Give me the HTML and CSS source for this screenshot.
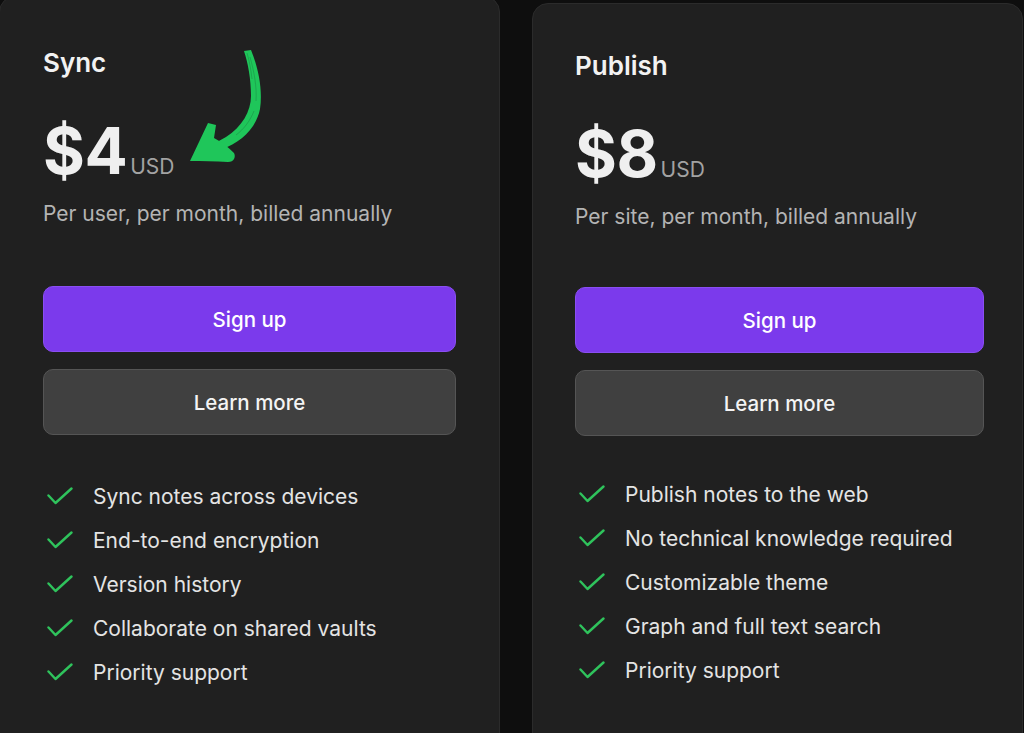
FILE: index.html
```html
<!DOCTYPE html>
<html lang="en">
<head>
  <meta charset="UTF-8" />
  <meta name="viewport" content="width=device-width, initial-scale=1.0" />
  <title>Pricing</title>
  <link rel="stylesheet" href="styles.css">
</head>
<body>
  <div class="plans">
    <div class="plan plan-sync">
      <h2 class="plan-name">Sync</h2>
      <div class="price"><span class="amount">$4</span><span class="currency">USD</span></div>
      <p class="billing">Per user, per month, billed annually</p>
      <button class="btn btn-primary">Sign up</button>
      <button class="btn btn-secondary">Learn more</button>
      <ul class="features">
        <li><svg class="check" viewBox="0 0 26 18"><path d="M1.5 8.5 L8.5 16 L24.5 1.5" /></svg>Sync notes across devices</li>
        <li><svg class="check" viewBox="0 0 26 18"><path d="M1.5 8.5 L8.5 16 L24.5 1.5" /></svg>End-to-end encryption</li>
        <li><svg class="check" viewBox="0 0 26 18"><path d="M1.5 8.5 L8.5 16 L24.5 1.5" /></svg>Version history</li>
        <li><svg class="check" viewBox="0 0 26 18"><path d="M1.5 8.5 L8.5 16 L24.5 1.5" /></svg>Collaborate on shared vaults</li>
        <li><svg class="check" viewBox="0 0 26 18"><path d="M1.5 8.5 L8.5 16 L24.5 1.5" /></svg>Priority support</li>
      </ul>

      <!-- hand drawn arrow pointing at the price -->
      <svg class="arrow" viewBox="0 0 100 130" width="100" height="130">
        <path class="arrow-ink" d="M74 10 C78 22 81 38 81 55 C81 70 72 86 56 96 L47 101 L52 108 C70 102 86 88 90 68 C93 48 88 26 81 9 Z" />
        <path class="arrow-ink" d="M20 120 L38 82 L46 84 L44 97 C52 101 58 106 64 112 C66 116 64 121 58 121 C45 120 32 120 20 120 Z" />
        <path class="arrow-grain" d="M80 16 C84 30 87 46 86 60 M77 12 C80 22 81 30 82 38 M84 70 C80 80 74 88 66 94" />
      </svg>
    </div>

    <div class="plan plan-publish">
      <h2 class="plan-name">Publish</h2>
      <div class="price"><span class="amount">$8</span><span class="currency">USD</span></div>
      <p class="billing">Per site, per month, billed annually</p>
      <button class="btn btn-primary">Sign up</button>
      <button class="btn btn-secondary">Learn more</button>
      <ul class="features">
        <li><svg class="check" viewBox="0 0 26 18"><path d="M1.5 8.5 L8.5 16 L24.5 1.5" /></svg>Publish notes to the web</li>
        <li><svg class="check" viewBox="0 0 26 18"><path d="M1.5 8.5 L8.5 16 L24.5 1.5" /></svg>No technical knowledge required</li>
        <li><svg class="check" viewBox="0 0 26 18"><path d="M1.5 8.5 L8.5 16 L24.5 1.5" /></svg>Customizable theme</li>
        <li><svg class="check" viewBox="0 0 26 18"><path d="M1.5 8.5 L8.5 16 L24.5 1.5" /></svg>Graph and full text search</li>
        <li><svg class="check" viewBox="0 0 26 18"><path d="M1.5 8.5 L8.5 16 L24.5 1.5" /></svg>Priority support</li>
      </ul>
    </div>
  </div>
</body>
</html>
```

FILE: styles.css
```css
body {
  margin: 0;
  background-color: #0e0e0e;
  font-family: Inter, "Liberation Sans", sans-serif;
  color: #ececec;
  overflow: hidden;
}
.plans {
  display: flex;
  gap: 32px;
  align-items: flex-start;
}
.plan {
  position: relative;
  box-sizing: border-box;
  height: 780px;
  padding: 0 43px;
  background-color: #202020;
  border: 1px solid #2b2b2b;
  border-radius: 16px;
}
.plan-sync {
  width: 501px;
  margin-top: -4px;
  margin-left: -1px;
  padding-top: 51px;
}
.plan-publish {
  width: 491px;
  margin-top: 3px;
  padding: 47px 38px 0 42px;
}
.plan-name {
  margin: 0;
  font-size: 26px;
  font-weight: 600;
  line-height: 30px;
  color: #f2f2f2;
}
.price {
  display: flex;
  align-items: baseline;
  gap: 3px;
  margin-top: 35px;
}
.amount {
  font-size: 64px;
  font-weight: 700;
  line-height: 76px;
  letter-spacing: -0.5px;
  color: #efefef;
}
.currency {
  font-size: 21px;
  color: #a3a3a3;
}
.billing {
  margin: 12px 0 0;
  font-size: 21px;
  line-height: 26px;
  color: #b4b4b4;
}
.btn {
  display: block;
  width: 100%;
  height: 66px;
  border-radius: 10px;
  font-family: inherit;
  font-size: 20.5px;
  font-weight: 500;
  color: #ffffff;
  cursor: pointer;
}
.btn-primary {
  margin-top: 59px;
  background-color: #7b3aec;
  border: 1px solid #8a4ef2;
}
.btn-secondary {
  margin-top: 17px;
  background-color: #404040;
  border: 1px solid #555555;
  color: #f4f4f4;
}
.features {
  list-style: none;
  margin: 39px 0 0;
  padding: 0;
}
.plan-publish .btn-primary {
  margin-top: 57px;
}
.plan-publish .features {
  margin-top: 36px;
}
.features li {
  display: flex;
  align-items: center;
  height: 44px;
  font-size: 21px;
  color: #e4e4e4;
}
.check {
  width: 26px;
  height: 18px;
  margin: 0 20px 0 4px;
  flex-shrink: 0;
}
.check path {
  fill: none;
  stroke: #2fc35c;
  stroke-width: 2.4;
  stroke-linecap: round;
  stroke-linejoin: round;
}
.arrow {
  position: absolute;
  left: 170px;
  top: 44px;
}
.arrow-ink {
  fill: #1fc65a;
}
.arrow-grain {
  fill: none;
  stroke: #187a3e;
  stroke-width: 0.7;
  opacity: 0.6;
}
```
